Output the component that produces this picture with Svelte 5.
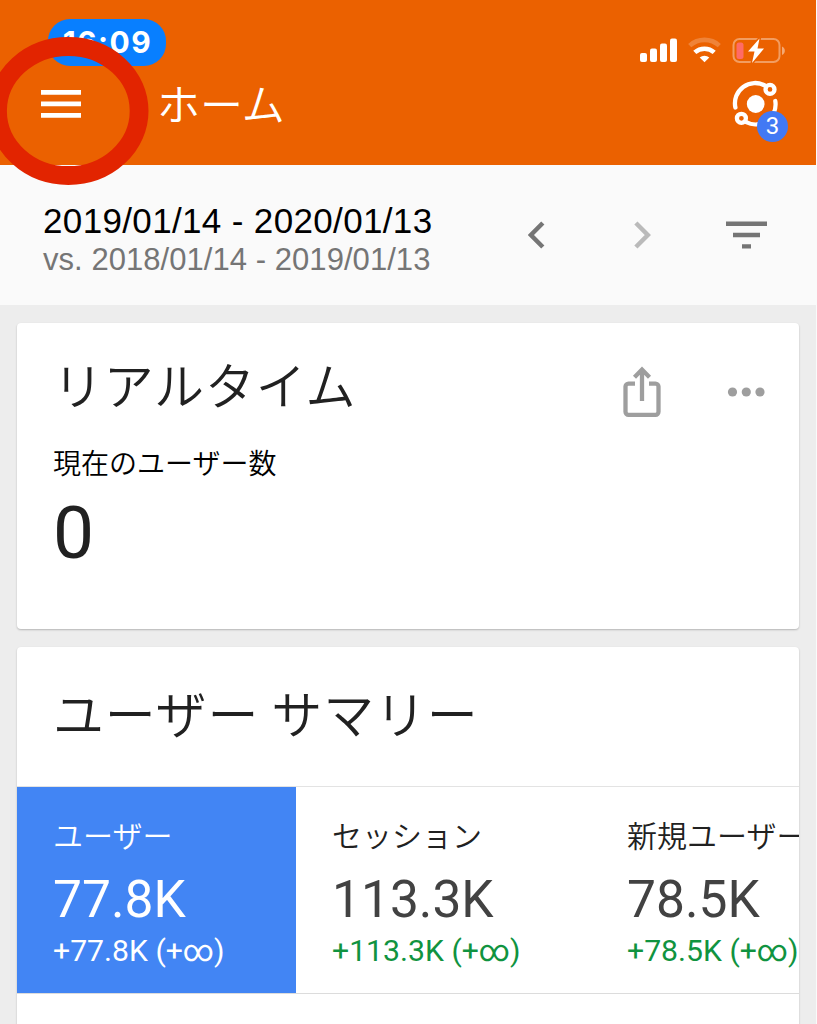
<script lang="ts">
	const metrics = [
		{ label: 'ユーザー', value: '77.8K', change: '+77.8K (+∞)' },
		{ label: 'セッション', value: '113.3K', change: '+113.3K (+∞)' },
		{ label: '新規ユーザー', value: '78.5K', change: '+78.5K (+∞)' }
	];

	let selected = 0;
</script>

<div class="screen">
	<header class="header">
		<div class="status">
			<span class="time">16:09</span>
			<svg class="signal" width="146" height="28" viewBox="0 0 146 28">
				<g fill="#fff">
					<rect x="0" y="16" width="7" height="9" rx="2" />
					<rect x="10" y="11.5" width="7" height="13.5" rx="2" />
					<rect x="20" y="6.5" width="7" height="18.5" rx="2" />
					<rect x="30" y="1.5" width="7" height="23.5" rx="2" />
				</g>
				<path
					d="M49.7 8.6a22 22 0 0 1 29.6 0"
					fill="none"
					stroke="#fff"
					stroke-opacity=".22"
					stroke-width="4.6"
				/>
				<path d="M54.8 15.4a14.5 14.5 0 0 1 19.4 0" fill="none" stroke="#fff" stroke-width="4.6" />
				<path d="M59.7 20.6a7.5 7.5 0 0 1 9.6 0l-4.8 4.6z" fill="#fff" />
				<rect
					x="93.5"
					y="2"
					width="46"
					height="23"
					rx="6"
					fill="none"
					stroke="#fff"
					stroke-opacity=".38"
					stroke-width="2"
				/>
				<path d="M142 9.5c3.8 1.2 3.8 7.3 0 8.5z" fill="#fff" fill-opacity=".45" />
				<rect x="96.5" y="5.5" width="7" height="16.5" rx="2.5" fill="#ff6b66" />
				<path
					d="M119.5 1.500l-11.500 13h6.500l-2.500 11.500l12-14.500h-6.500z"
					fill="#fff"
					stroke="#eb6100"
					stroke-width="3"
					paint-order="stroke"
				/>
			</svg>
		</div>
		<div class="nav">
			<button class="menu" type="button" aria-label="メニュー">
				<svg width="40" height="28" viewBox="0 0 40 28" fill="#fff"
					><path d="M0 0h40v4.8H0zM0 11.5h40v4.8H0zM0 23h40v4.8H0z" /></svg
				>
			</button>
			<h1>ホーム</h1>
			<div class="insights">
				<svg width="46" height="48" viewBox="-.7 0 46 48" fill="none" stroke="#fff" stroke-width="4.3">
					<circle cx="23" cy="24" r="8.9" fill="#fff" stroke="none" />
					<path d="M2.7 27.5A20.2 20.2 0 0 1 32.5 5.7" stroke-linecap="round" />
					<path d="M42.6 21A20.2 20.2 0 0 1 13.5 42.2" stroke-linecap="round" />
					<circle cx="37.3" cy="9.4" r="4.5" />
					<circle cx="8.7" cy="38.3" r="4.5" />
				</svg>
				<span class="badge">3</span>
			</div>
		</div>
	</header>

	<section class="range">
		<div class="dates">
			<div class="current">2019/01/14 - 2020/01/13</div>
			<div class="previous">vs. 2018/01/14 - 2019/01/13</div>
		</div>
		<svg width="17" height="28" viewBox="0 0 17 28" fill="none" stroke="#757575" stroke-width="4.5"
			><path d="M14.8 2L2.9 14l11.9 12" /></svg
		>
		<svg width="17" height="28" viewBox="0 0 17 28" fill="none" stroke="#bababa" stroke-width="4.5"
			><path d="M1.9 2l11.9 12L1.9 26" /></svg
		>
		<svg width="41" height="28" viewBox="0 0 41 28" fill="#757575"
			><path d="M0 .5h41v4.6H0zM7 11.7h27v4.6H7zM16 23.2h9v4.3h-9z" /></svg
		>
	</section>

	<main>
		<section class="card realtime">
			<div class="title">
				<h2>リアルタイム</h2>
				<svg width="38" height="51" viewBox="0 0 38 51" fill="none" stroke="#9e9e9e" stroke-width="4.3">
					<path d="M12 17.6H5.5a3 3 0 0 0-3 3v25.2a3 3 0 0 0 3 3h27a3 3 0 0 0 3-3V20.6a3 3 0 0 0-3-3H26" />
					<path d="M19 35V4M11.5 11.2L19 3.5l7.5 7.7" />
				</svg>
				<svg width="38" height="10" viewBox="0 0 38 10" fill="#9e9e9e">
					<circle cx="5.5" cy="5" r="4.6" />
					<circle cx="19.3" cy="5" r="4.6" />
					<circle cx="33" cy="5" r="4.6" />
				</svg>
			</div>
			<p>現在のユーザー数</p>
			<div class="count">0</div>
		</section>

		<section class="card summary">
			<h2>ユーザー サマリー</h2>
			<div class="metrics">
				{#each metrics as metric, i}
					<button
						class="metric"
						class:selected={i === selected}
						type="button"
						on:click={() => (selected = i)}
					>
						<span class="label">{metric.label}</span>
						<span class="value">{metric.value}</span>
						<span class="change">{metric.change}</span>
					</button>
				{/each}
			</div>
		</section>
	</main>

	<svg class="marker" width="160" height="150" viewBox="0 0 160 150"
		><ellipse cx="68.3" cy="75" rx="70.8" ry="64.5" fill="none" stroke="#e22400" stroke-width="18.8" /></svg
	>
</div>

<style>
	:global(body) {
		margin: 0;
		background: #fafafa;
	}

	.screen {
		position: relative;
		display: flex;
		flex-direction: column;
		width: 816px;
		height: 1024px;
		overflow: hidden;
		background: #ededed;
		font-family: 'Noto Sans CJK JP', sans-serif;
		font-weight: 350;
		color: #212121;
	}

	svg {
		display: block;
		flex: none;
	}

	h1,
	h2,
	p {
		margin: 0;
		font-weight: 350;
		white-space: nowrap;
	}

	button {
		border: 0;
		padding: 0;
		background: none;
		font: inherit;
		color: inherit;
		text-align: left;
	}

	.header {
		flex: none;
		box-sizing: border-box;
		height: 165px;
		padding-top: 19px;
		background: #eb6100;
		color: #fff;
	}

	.status {
		display: flex;
		justify-content: space-between;
		padding: 0 30px 0 48px;
	}

	.time {
		width: 118px;
		height: 47px;
		border-radius: 22px;
		background: #087fff;
		font: 700 30px/47px Inter, sans-serif;
		letter-spacing: 1.5px;
		text-indent: 1px;
		text-align: center;
	}

	.signal {
		margin-top: 18px;
	}

	.nav {
		display: flex;
		align-items: center;
		height: 76px;
		padding: 0 38px 0 41px;
	}

	h1 {
		margin: -4px 0 0 76px;
		font-size: 43px;
		line-height: 60px;
	}

	.insights {
		position: relative;
		margin-left: auto;
	}

	.badge {
		position: absolute;
		left: 25px;
		top: 31px;
		width: 31px;
		height: 31px;
		border-radius: 50%;
		background: #4279f4;
		font: 400 24px/31px Roboto, sans-serif;
		text-align: center;
	}

	.range {
		display: flex;
		flex: none;
		align-items: center;
		box-sizing: border-box;
		height: 140px;
		padding: 0 49px 0 43px;
		background: #fafafa;
	}

	.dates {
		width: 485px;
		padding-top: 10px;
		font-family: 'Liberation Sans', sans-serif;
		font-weight: 400;
		white-space: nowrap;
	}

	.current {
		font-size: 35px;
		line-height: 40px;
		letter-spacing: 0.35px;
		color: #000;
	}

	.previous {
		font-size: 31px;
		line-height: 38px;
		letter-spacing: 0.05px;
		color: #757575;
	}

	.range svg + svg {
		margin-left: 89px;
	}

	.range svg:last-child {
		margin-left: 75px;
	}

	main {
		display: flex;
		flex: none;
		flex-direction: column;
		gap: 18px;
		padding: 18px 17px 0;
	}

	.card {
		border-radius: 4px;
		background: #fff;
		box-shadow: 0 1px 2px rgba(0, 0, 0, 0.24);
		overflow: hidden;
	}

	.realtime {
		height: 306px;
	}

	.title {
		display: flex;
		align-items: center;
		height: 137px;
		padding: 0 34px 0 36px;
	}

	h2 {
		font-size: 51px;
		line-height: 72px;
		letter-spacing: 0.8px;
	}

	.title h2 {
		width: 570px;
		margin-top: -18px;
		font-size: 50px;
	}

	.title svg + svg {
		margin-left: 66px;
	}

	p {
		margin-top: -18px;
		padding-left: 36px;
		font-size: 28px;
		line-height: 40px;
		color: #000;
	}

	.count {
		padding: 9px 36px 0;
		font: 400 73px/84px Roboto, sans-serif;
	}

	.summary {
		height: 420px;
	}

	.summary h2 {
		box-sizing: border-box;
		height: 140px;
		padding: 29px 36px 0;
		border-bottom: 1px solid #e3e3e3;
	}

	.metrics {
		display: flex;
		height: 206px;
		border-bottom: 1px solid #dcdcdc;
	}

	.metric {
		display: flex;
		flex: none;
		flex-direction: column;
		box-sizing: border-box;
		width: 295px;
		padding: 25px 0 0 36px;
		color: #424242;
		white-space: nowrap;
	}

	.metric:first-child {
		width: 279px;
	}

	.label {
		font-size: 30px;
		line-height: 44px;
		color: #212121;
	}

	.value {
		margin-top: 14px;
		font: 400 51.5px/60px Roboto, sans-serif;
	}

	.change {
		margin-top: 3px;
		font: 400 30.2px/36px Roboto, sans-serif;
		color: #109340;
	}

	.selected {
		background: #4285f4;
	}

	.selected span {
		color: #fff;
	}

	.marker {
		position: absolute;
		left: 0;
		top: 36px;
	}
</style>
